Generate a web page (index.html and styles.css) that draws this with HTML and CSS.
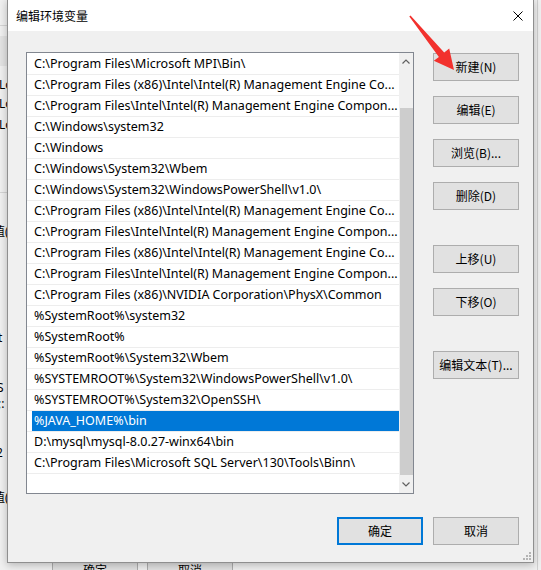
FILE: index.html
```html
<!DOCTYPE html>
<html lang="zh-CN">
<head>
<meta charset="utf-8">
<title>编辑环境变量</title>
<link rel="stylesheet" href="styles.css">
</head>
<body>
<div class="desktop">
  <div class="backwin">
    <div class="bw-line bw-l1"></div>
    <div class="bw-gray bw-g1"></div>
    <span class="bw-text bw-t1">Lo</span>
    <span class="bw-text bw-t2">Lo</span>
    <span class="bw-text bw-t3">Lo</span>
    <div class="bw-line bw-l2"></div>
    <span class="bw-text bw-t4">值(</span>
    <span class="bw-text bw-t5">t</span>
    <span class="bw-text bw-t6">S</span>
    <span class="bw-text bw-t7">;:</span>
    <span class="bw-text bw-t8">2</span>
    <span class="bw-text bw-t9">值(</span>
    <div class="bw-vline"></div>
    <div class="bw-btn bw-b1">确定</div>
    <div class="bw-btn bw-b2">取消</div>
  </div>

  <div class="dialog">
    <div class="titlebar">
      <span class="title">编辑环境变量</span>
      <span class="close">
        <svg width="10" height="10" viewBox="0 0 10 10"><path d="M0.5 0.5 L9.5 9.5 M9.5 0.5 L0.5 9.5" stroke="#000" stroke-width="1" fill="none"/></svg>
      </span>
    </div>
    <div class="client">
      <div class="main">
        <div class="listbox">
          <div class="rows">
            <div class="row"><span class="cell">C:\Program Files\Microsoft MPI\Bin\</span></div>
            <div class="row"><span class="cell">C:\Program Files (x86)\Intel\Intel(R) Management Engine Co...</span></div>
            <div class="row"><span class="cell">C:\Program Files\Intel\Intel(R) Management Engine Compon...</span></div>
            <div class="row"><span class="cell">C:\Windows\system32</span></div>
            <div class="row"><span class="cell">C:\Windows</span></div>
            <div class="row"><span class="cell">C:\Windows\System32\Wbem</span></div>
            <div class="row"><span class="cell">C:\Windows\System32\WindowsPowerShell\v1.0\</span></div>
            <div class="row"><span class="cell">C:\Program Files (x86)\Intel\Intel(R) Management Engine Co...</span></div>
            <div class="row"><span class="cell">C:\Program Files\Intel\Intel(R) Management Engine Compon...</span></div>
            <div class="row"><span class="cell">C:\Program Files (x86)\Intel\Intel(R) Management Engine Co...</span></div>
            <div class="row"><span class="cell">C:\Program Files\Intel\Intel(R) Management Engine Compon...</span></div>
            <div class="row"><span class="cell">C:\Program Files (x86)\NVIDIA Corporation\PhysX\Common</span></div>
            <div class="row"><span class="cell">%SystemRoot%\system32</span></div>
            <div class="row"><span class="cell">%SystemRoot%</span></div>
            <div class="row"><span class="cell">%SystemRoot%\System32\Wbem</span></div>
            <div class="row"><span class="cell">%SYSTEMROOT%\System32\WindowsPowerShell\v1.0\</span></div>
            <div class="row"><span class="cell">%SYSTEMROOT%\System32\OpenSSH\</span></div>
            <div class="row selected"><span class="cell">%JAVA_HOME%\bin</span></div>
            <div class="row"><span class="cell">D:\mysql\mysql-8.0.27-winx64\bin</span></div>
            <div class="row"><span class="cell">C:\Program Files\Microsoft SQL Server\130\Tools\Binn\</span></div>
          </div>
          <div class="scrollbar">
            <div class="sb-btn">
              <svg width="8" height="5" viewBox="0 0 8 5"><path d="M0.5 4.5 L4 1 L7.5 4.5" stroke="#606060" stroke-width="1.2" fill="none"/></svg>
            </div>
            <div class="sb-track"><div class="sb-thumb"></div></div>
            <div class="sb-btn">
              <svg width="8" height="5" viewBox="0 0 8 5"><path d="M0.5 0.5 L4 4 L7.5 0.5" stroke="#606060" stroke-width="1.2" fill="none"/></svg>
            </div>
          </div>
        </div>
        <div class="side">
          <button class="btn">新建(N)</button>
          <button class="btn">编辑(E)</button>
          <button class="btn">浏览(B)...</button>
          <button class="btn">删除(D)</button>
          <button class="btn group">上移(U)</button>
          <button class="btn">下移(O)</button>
          <button class="btn group">编辑文本(T)...</button>
        </div>
      </div>
      <div class="footer">
        <button class="btn default">确定</button>
        <button class="btn">取消</button>
      </div>
    </div>
    <div class="grip">
      <svg width="9" height="9" viewBox="0 0 9 9" fill="#b4b4b4">
        <rect x="7" y="1" width="2" height="2"/>
        <rect x="4" y="4" width="2" height="2"/><rect x="7" y="4" width="2" height="2"/>
        <rect x="1" y="7" width="2" height="2"/><rect x="4" y="7" width="2" height="2"/><rect x="7" y="7" width="2" height="2"/>
      </svg>
    </div>
  </div>

  <svg class="arrow" width="541" height="570" viewBox="0 0 541 570">
    <polygon fill="#f2312d" points="410.5,15.4 444.2,52.6 449.2,48.4 454,70 433.8,60.8 438.9,56.9 409.3,16.6"/>
  </svg>
</div>
</body>
</html>
```

FILE: styles.css
```css
html, body {
  margin: 0;
  padding: 0;
}
body {
  width: 541px;
  height: 570px;
  overflow: hidden;
  background: #f0f0f0;
  font-family: "Noto Sans", "Noto Sans CJK SC", sans-serif;
  font-size: 12px;
  color: #000;
}
.desktop {
  position: relative;
  width: 541px;
  height: 570px;
  overflow: hidden;
}

/* background window fragments */
.backwin {
  position: absolute;
  inset: 0;
  background: #f0f0f0;
}
.bw-line {
  position: absolute;
  left: 0;
  width: 10px;
  height: 1px;
  background: #d4d4d4;
}
.bw-l1 { top: 25px; }
.bw-l2 { top: 192px; }
.bw-gray {
  position: absolute;
  left: 0;
  width: 10px;
  background: #e3e3e3;
}
.bw-g1 { top: 36px; height: 30px; }
.bw-text {
  position: absolute;
  font-family: "Noto Sans", "Noto Sans CJK SC", sans-serif;
  font-size: 12px;
  line-height: 16px;
  color: #000;
}
.bw-t1 { left: -1px; top: 77px; }
.bw-t2 { left: -1px; top: 96px; }
.bw-t3 { left: -1px; top: 117px; }
.bw-t4 { left: -7px; top: 224px; }
.bw-t5 { left: -2px; top: 330px; }
.bw-t6 { left: -3px; top: 380px; }
.bw-t7 { left: -2px; top: 396px; }
.bw-t8 { left: -4px; top: 445px; }
.bw-t9 { left: -7px; top: 490px; }
.bw-vline {
  position: absolute;
  left: 537px;
  top: 0;
  width: 1px;
  height: 570px;
  background: #d0d0d0;
}
.bw-btn {
  position: absolute;
  top: 556px;
  height: 28px;
  box-sizing: border-box;
  border: 1px solid #adadad;
  background: #e1e1e1;
  font-family: "Noto Sans CJK SC", sans-serif;
  font-size: 12px;
  line-height: 26px;
  text-align: center;
}
.bw-b1 { left: 52px; width: 86px; }
.bw-b2 { left: 147px; width: 86px; }

/* dialog window */
.dialog {
  position: absolute;
  left: 7px;
  top: -1px;
  width: 527px;
  height: 564px;
  box-sizing: border-box;
  border: 1px solid #8f8f8f;
  background: #f0f0f0;
  box-shadow: 0 2px 8px rgba(0, 0, 0, 0.25);
  display: flex;
  flex-direction: column;
}
.titlebar {
  height: 31px;
  flex: none;
  background: #fff;
  display: flex;
  align-items: center;
  justify-content: space-between;
  padding-left: 8px;
}
.title {
  font-family: "Noto Sans CJK SC", sans-serif;
  font-size: 12px;
  line-height: 16px;
  color: #000;
}
.close {
  width: 46px;
  height: 31px;
  display: flex;
  align-items: center;
  justify-content: center;
  padding-left: 16px;
  box-sizing: border-box;
}
.close svg { display: block; }

.client {
  flex: 1;
  padding: 21px 14px 0 18px;
  display: flex;
  flex-direction: column;
}
.main {
  display: flex;
  gap: 19px;
}
.listbox {
  width: 388px;
  height: 442px;
  box-sizing: border-box;
  border: 1px solid #828790;
  background: #fff;
  display: flex;
}
.rows {
  flex: 1;
  min-width: 0;
  padding-top: 1px;
  overflow: hidden;
}
.row {
  height: 20px;
  border-bottom: 1px solid #ededed;
  padding-left: 5px;
  display: flex;
}
.cell {
  flex: 1;
  min-width: 0;
  padding-left: 2px;
  line-height: 20px;
  white-space: nowrap;
  overflow: hidden;
  font-family: "Noto Sans", "Noto Sans CJK SC", sans-serif;
  font-size: 12.5px;
}
.row.selected .cell {
  background: #0078d7;
  color: #fff;
}
.scrollbar {
  width: 14px;
  flex: none;
  background: #f0f0f0;
  display: flex;
  flex-direction: column;
}
.sb-btn {
  height: 17px;
  flex: none;
  display: flex;
  align-items: center;
  justify-content: center;
}
.sb-btn svg { display: block; }
.sb-track {
  flex: 1;
  padding-top: 38px;
}
.sb-thumb {
  height: 367px;
  margin-left: 1px;
  background: #cdcdcd;
}

.side {
  width: 86px;
  padding-top: 1px;
  display: flex;
  flex-direction: column;
  gap: 15px;
}
.btn {
  width: 86px;
  height: 28px;
  box-sizing: border-box;
  margin: 0;
  padding: 0;
  border: 1px solid #adadad;
  background: #e1e1e1;
  font-family: "Noto Sans CJK SC", "Noto Sans", sans-serif;
  font-size: 12px;
  color: #000;
  text-align: center;
  line-height: 26px;
}
.btn.group { margin-top: 20px; }
.btn.default {
  border: 2px solid #0078d7;
  line-height: 24px;
}
.footer {
  margin-top: 23px;
  display: flex;
  justify-content: flex-end;
  gap: 10px;
}
.grip {
  position: absolute;
  right: 2px;
  bottom: 2px;
  width: 9px;
  height: 9px;
}
.grip svg { display: block; }

.arrow {
  position: absolute;
  left: 0;
  top: 0;
  pointer-events: none;
}
```
